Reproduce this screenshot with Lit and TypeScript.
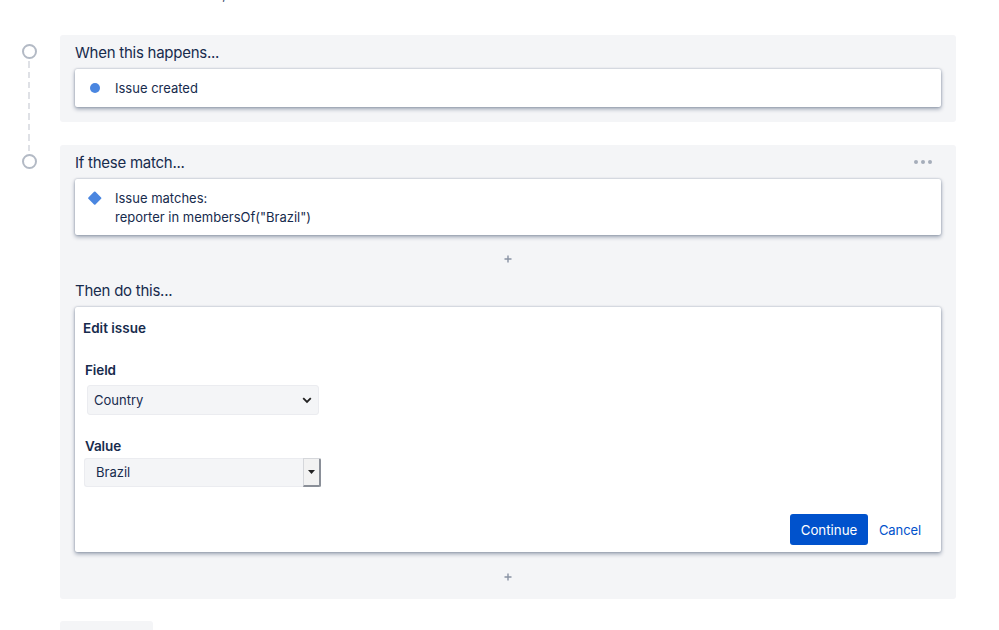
import { LitElement, html, css } from "lit";
import { customElement } from "lit/decorators.js";

@customElement("app-root")
export class AppRoot extends LitElement {
  static styles = css`
    :host {
      display: block;
      width: 999px;
      height: 630px;
      overflow: hidden;
      background: #fff;
      font-family: Inter, "Liberation Sans", sans-serif;
      color: #172b4d;
      font-size: 13px;
      box-sizing: border-box;
    }
    * { box-sizing: border-box; }
    .clip { height: 2px; overflow: hidden; padding-left: 222px; line-height: 2px; font-size: 14px; color: #42526e; }
    .clip span { display: block; transform: translateY(-7px); height: 2px; line-height: 2px; }
    .flow { position: relative; display: flex; flex-direction: column; padding: 33px 43px 0 60px; }
    .panel { position: relative; background: #f4f5f7; border-radius: 3px; padding: 8px 15px 15px; }
    .panel.first { height: 87px; margin-bottom: 23px; }
    .panel.second { height: 454px; margin-bottom: 22px; padding-bottom: 0; }
    .stub { width: 93px; height: 30px; background: #f4f5f7; border-radius: 3px; }
    .node { position: absolute; left: -38px; top: 9px; width: 15px; height: 15px; border-radius: 50%; border: 2px solid #b3bac5; background: #fff; }
    .line { position: absolute; left: 28px; top: 61px; height: 90px; width: 2px; background: repeating-linear-gradient(to bottom, #dfe1e6 0, #dfe1e6 6.5px, transparent 6.5px, transparent 10.5px); }
    .title { font-size: 15px; line-height: 20px; height: 20px; margin-bottom: 6px; letter-spacing: -0.25px; }
    .title.then { margin-top: -2px; margin-bottom: 6px; }
    .card { background: #fff; border-radius: 2px; box-shadow: 0 2px 4px rgba(9,30,66,0.38), 0 0 2px rgba(9,30,66,0.3); }
    .row { display: flex; align-items: flex-start; gap: 15px; padding: 10px 15px; line-height: 19px; }
    .row.one { height: 38px; }
    .row.two { height: 56px; }
    .ic { width: 10px; height: 18px; flex: none; display: flex; align-items: center; justify-content: center; }
    .dot { width: 10px; height: 10px; border-radius: 50%; background: #4a86e0; flex: none; }
    .diamond { width: 9.5px; height: 9.5px; background: #4a86e0; transform: rotate(45deg); border-radius: 1px; flex: none; }
    .more { position: absolute; right: 24px; top: 15px; display: flex; gap: 3px; }
    .more i { width: 4px; height: 4px; border-radius: 50%; background: #a5adba; display: block; }
    .plus { height: 48px; display: flex; align-items: center; justify-content: center; }
    .plus.last { height: 49px; }
    .plus svg { display: block; }
    .edit { height: 245px; padding: 12px 8px 0; display: flex; flex-direction: column; }
    .edit h3 { margin: 0 0 24px; font-size: 13.5px; line-height: 18px; font-weight: 600; }
    .lbl { font-size: 13.5px; line-height: 18px; font-weight: 600; margin-left: 2px; letter-spacing: -0.1px; }
    .sel { width: 232px; height: 30px; margin: 6px 0 22px 4px; background: #f4f5f7; border: 1px solid #ebecf0; border-radius: 3px; display: flex; align-items: center; justify-content: space-between; padding: 0 6px; }
    .sel svg { display: block; }
    .combo { display: flex; width: 237px; height: 29px; margin: 3px 0 0 1px; }
    .combo .inp { flex: 1; background: #f4f5f7; border: 1px solid #ebecf0; border-right: none; border-radius: 3px 0 0 3px; padding-left: 11px; line-height: 27px; }
    .combo .btn { width: 18px; background: #f2f2f2; border: 1px solid #d5d7db; border-right: 2px solid #8a8f98; border-bottom: 2px solid #8a8f98; border-radius: 0 2px 2px 0; display: flex; align-items: center; justify-content: center; }
    .actions { margin-top: 27px; display: flex; justify-content: flex-end; align-items: center; gap: 11px; padding-right: 12px; }
    .cont { height: 31px; width: 78px; background: #0052cc; color: #fff; border-radius: 3px; display: flex; align-items: center; justify-content: center; font-size: 13.3px; }
    .cancel { color: #0052cc; letter-spacing: -0.1px; }
  `;

  private plus(cls = "") {
    return html`<div class="plus ${cls}"><svg width="8" height="8" viewBox="0 0 8 8"><path d="M4 .5v7M.5 4h7" stroke="#8993a4" stroke-width="1.4" fill="none"/></svg></div>`;
  }

  render() {
    return html`
      <div class="clip"><span>,</span></div>
      <div class="line"></div>
      <div class="flow">
        <section class="panel first">
          <div class="node"></div>
          <div class="title">When this happens...</div>
          <div class="card row one"><span class="ic"><span class="dot"></span></span><span>Issue created</span></div>
        </section>
        <section class="panel second">
          <div class="node"></div>
          <div class="more"><i></i><i></i><i></i></div>
          <div class="title">If these match...</div>
          <div class="card row two"><span class="ic"><span class="diamond"></span></span><span>Issue matches:<br />reporter in membersOf("Brazil")</span></div>
          ${this.plus()}
          <div class="title then">Then do this...</div>
          <div class="card edit">
            <h3>Edit issue</h3>
            <div class="lbl">Field</div>
            <div class="sel"><span>Country</span>
              <svg width="10" height="7" viewBox="0 0 10 7"><path d="M1.2 1.2 5 5l3.8-3.8" stroke="#222" stroke-width="1.8" fill="none"/></svg>
            </div>
            <div class="lbl">Value</div>
            <div class="combo"><div class="inp">Brazil</div>
              <div class="btn"><svg width="7" height="4" viewBox="0 0 7 4"><path d="M0 0h7L3.5 4z" fill="#222"/></svg></div>
            </div>
            <div class="actions"><div class="cont">Continue</div><div class="cancel">Cancel</div></div>
          </div>
          ${this.plus("last")}
        </section>
        <div class="stub"></div>
      </div>
    `;
  }
}
